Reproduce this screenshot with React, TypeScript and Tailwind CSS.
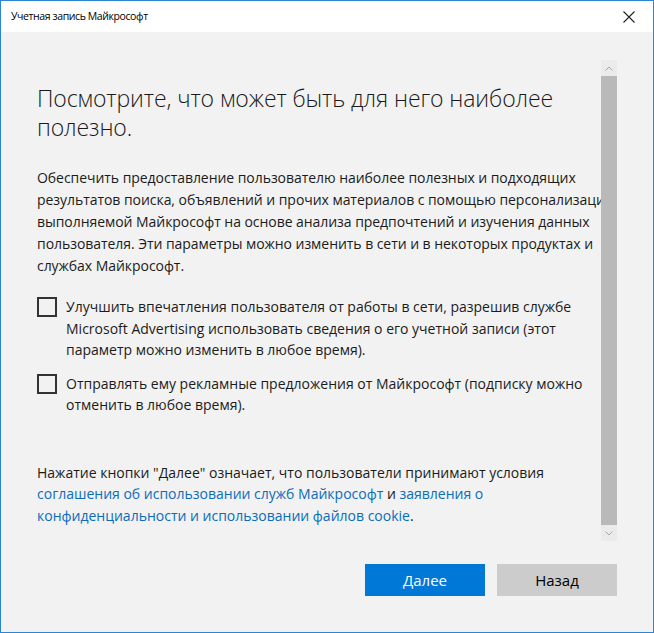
export default function App() {
  return (
    <div
      className="w-[654px] h-[633px] border border-[#2a86d4] bg-[#f2f2f2] flex flex-col overflow-hidden text-[#1b1b1b]"
      style={{ fontFamily: '"Open Sans", "Noto Sans", sans-serif' }}
    >
      {/* Title bar */}
      <div className="h-[31px] bg-white flex items-center justify-between pl-[10px] pr-[18px] shrink-0">
        <span className="text-[10.5px] tracking-[-0.4px] text-black">Учетная запись Майкрософт</span>
        <svg width="12" height="12" viewBox="0 0 12 12" className="text-[#222]">
          <path d="M0.5 0.5 L11.5 11.5 M11.5 0.5 L0.5 11.5" stroke="currentColor" strokeWidth="1.1" />
        </svg>
      </div>

      {/* Scrollable area */}
      <div className="flex h-[509px] shrink-0">
        <div className="flex-1 overflow-hidden pl-[36px] pt-[52px] whitespace-nowrap">
          <h1 className="text-[23px] font-light leading-[29px] tracking-[-0.1px] text-[#1a1a1a]">
            Посмотрите, что может быть для него наиболее
            <br />
            полезно.
          </h1>

          <p className="mt-[25px] text-[14px] leading-[22px] tracking-[-0.05px]">
            Обеспечить предоставление пользователю наиболее полезных и подходящих
            <br />
            результатов поиска, объявлений и прочих материалов с помощью персонализации
            <br />
            выполняемой Майкрософт на основе анализа предпочтений и изучения данных
            <br />
            пользователя. Эти параметры можно изменить в сети и в некоторых продуктах и
            <br />
            службах Майкрософт.
          </p>

          <div className="mt-[19px] flex flex-col gap-[12px]">
            <label className="flex items-start gap-[9px]">
              <span className="mt-[1px] w-[20px] h-[20px] border-2 border-[#333] shrink-0" />
              <span className="text-[14px] leading-[21.5px]">
                Улучшить впечатления пользователя от работы в сети, разрешив службе
                <br />
                Microsoft Advertising использовать сведения о его учетной записи (этот
                <br />
                параметр можно изменить в любое время).
              </span>
            </label>
            <label className="flex items-start gap-[9px]">
              <span className="mt-[1px] w-[20px] h-[20px] border-2 border-[#333] shrink-0" />
              <span className="text-[14px] leading-[21.5px]">
                Отправлять ему рекламные предложения от Майкрософт (подписку можно
                <br />
                отменить в любое время).
              </span>
            </label>
          </div>

          <p className="mt-[46px] text-[14px] leading-[21.5px]">
            Нажатие кнопки "Далее" означает, что пользователи принимают условия
            <br />
            <a className="text-[#0a6cbc]">соглашения об использовании служб Майкрософт</a> и{" "}
            <a className="text-[#0a6cbc]">заявления о</a>
            <br />
            <a className="text-[#0a6cbc]">конфиденциальности и использовании файлов cookie</a>.
          </p>
        </div>

        {/* Scrollbar */}
        <div className="w-[16px] mr-[36px] mt-[28px] flex flex-col bg-[#ebebeb]">
          <div className="h-[16px] flex items-center justify-center">
            <svg width="8" height="5" viewBox="0 0 8 5">
              <path d="M0.5 4.5 L4 1 L7.5 4.5" stroke="#a8a8a8" fill="none" strokeWidth="1" />
            </svg>
          </div>
          <div className="flex-1 bg-[#b9b9b9]" />
          <div className="h-[16px] flex items-center justify-center">
            <svg width="8" height="5" viewBox="0 0 8 5">
              <path d="M0.5 0.5 L4 4 L7.5 0.5" stroke="#a8a8a8" fill="none" strokeWidth="1" />
            </svg>
          </div>
        </div>
      </div>

      {/* Buttons */}
      <div className="flex justify-end gap-[12px] pr-[36px] mt-[23px]">
        <button className="w-[120px] h-[32px] bg-[#0078d7] text-white text-[15px]">Далее</button>
        <button className="w-[120px] h-[32px] bg-[#cccccc] text-black text-[15px]">Назад</button>
      </div>
    </div>
  );
}
